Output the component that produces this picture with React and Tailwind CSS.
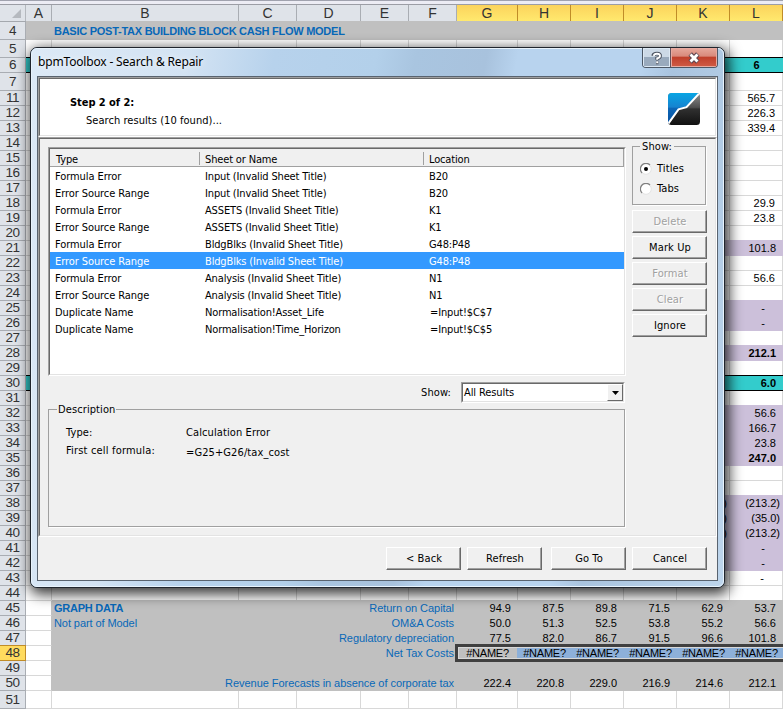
const columns = [
  { name: 'A', width: 'w-[26px]' },
  { name: 'B', width: 'w-[187px]' },
  { name: 'C', width: 'w-[58px]' },
  { name: 'D', width: 'w-[64px]' },
  { name: 'E', width: 'w-[48px]' },
  { name: 'F', width: 'w-[48px]' },
  { name: 'G', width: 'w-[61px]', active: true },
  { name: 'H', width: 'w-[53px]', active: true },
  { name: 'I', width: 'w-[53px]', active: true },
  { name: 'J', width: 'w-[53px]', active: true },
  { name: 'K', width: 'w-[53px]', active: true },
  { name: 'L', width: 'w-[53px]', active: true },
];

const rows = [
  { n: 4, tall: true, fill: 'title', cells: { B: 'BASIC POST-TAX BUILDING BLOCK CASH FLOW MODEL' } },
  { n: 5, tall: true },
  { n: 6, fill: 'teal', bold: true, center: true, cells: { L: '6' } },
  { n: 7, tall: true },
  { n: 11, cells: { L: '565.7' } },
  { n: 12, cells: { L: '226.3' } },
  { n: 13, cells: { L: '339.4' } },
  { n: 14 },
  { n: 15 },
  { n: 16 },
  { n: 17 },
  { n: 18, cells: { L: '29.9' } },
  { n: 19, cells: { L: '23.8' } },
  { n: 20 },
  { n: 21, fill: 'purple', cells: { L: '101.8' } },
  { n: 22 },
  { n: 23, cells: { L: '56.6' } },
  { n: 24 },
  { n: 25, fill: 'purple', cells: { L: '-' } },
  { n: 26, fill: 'purple', cells: { L: '-' } },
  { n: 27 },
  { n: 28, fill: 'purple', bold: true, cells: { L: '212.1' } },
  { n: 29 },
  { n: 30, fill: 'teal', bold: true, cells: { L: '6.0' } },
  { n: 31 },
  { n: 32, fill: 'purple', cells: { L: '56.6' } },
  { n: 33, fill: 'purple', cells: { L: '166.7' } },
  { n: 34, fill: 'purple', cells: { L: '23.8' } },
  { n: 35, fill: 'purple', bold: true, cells: { L: '247.0' } },
  { n: 36 },
  { n: 37 },
  { n: 38, fill: 'purple', cells: { K: '(213.2)', L: '(213.2)' } },
  { n: 39, fill: 'purple', cells: { K: '(35.0)', L: '(35.0)' } },
  { n: 40, fill: 'purple', cells: { K: '(213.2)', L: '(213.2)' } },
  { n: 41, fill: 'purple', cells: { L: '-' } },
  { n: 42, fill: 'purple', cells: { L: '-' } },
  { n: 43, cells: { L: '-' } },
  { n: 44 },
  { n: 45, fill: 'gray', cells: { B: 'GRAPH DATA', F: 'Return on Capital', G: '94.9', H: '87.5', I: '89.8', J: '71.5', K: '62.9', L: '53.7' } },
  { n: 46, fill: 'gray', cells: { B: 'Not part of Model', F: 'OM&A Costs', G: '50.0', H: '51.3', I: '52.5', J: '53.8', K: '55.2', L: '56.6' } },
  { n: 47, fill: 'gray', cells: { F: 'Regulatory depreciation', G: '77.5', H: '82.0', I: '86.7', J: '91.5', K: '96.6', L: '101.8' } },
  { n: 48, fill: 'gray', center: true, selected: true, cells: { F: 'Net Tax Costs', G: '#NAME?', H: '#NAME?', I: '#NAME?', J: '#NAME?', K: '#NAME?', L: '#NAME?' } },
  { n: 49, fill: 'gray' },
  { n: 50, fill: 'gray', cells: { F: 'Revenue Forecasts in absence of corporate tax', G: '222.4', H: '220.8', I: '229.0', J: '216.9', K: '214.6', L: '212.1' } },
  { n: 51, tall: true },
];

const results = [
  ['Formula Error', 'Input (Invalid Sheet Title)', 'B20'],
  ['Error Source Range', 'Input (Invalid Sheet Title)', 'B20'],
  ['Formula Error', 'ASSETS (Invalid Sheet Title)', 'K1'],
  ['Error Source Range', 'ASSETS (Invalid Sheet Title)', 'K1'],
  ['Formula Error', 'BldgBlks (Invalid Sheet Title)', 'G48:P48'],
  ['Error Source Range', 'BldgBlks (Invalid Sheet Title)', 'G48:P48'],
  ['Formula Error', 'Analysis (Invalid Sheet Title)', 'N1'],
  ['Error Source Range', 'Analysis (Invalid Sheet Title)', 'N1'],
  ['Duplicate Name', 'Normalisation!Asset_Life', '=Input!$C$7'],
  ['Duplicate Name', 'Normalisation!Time_Horizon', '=Input!$C$5'],
];

const fillClass = (fill, col) => {
  if (fill === 'title') return 'bg-[#c0c0c0] -mt-px';
  if (fill === 'teal') return 'bg-[#33cccc] border-y border-black -mt-px';
  if (fill === 'purple' && col >= 'G') return 'bg-[#ccc0da] -mt-px';
  if (fill === 'gray' && col !== 'A') return 'bg-[#c0c0c0] -mt-px';
  if (fill === 'gray') return 'border-r border-b border-r-[#c0c0c0] border-b-[#d8d8d8]';
  return 'border-r border-b border-[#d8d8d8]';
};

const alignClass = (row, col, text) => {
  if (col === 'B') return 'justify-start pl-[2px]';
  if (col === 'F') return 'justify-end pr-[3px]';
  if (row.center) return 'justify-center';
  if (text === '-') return 'justify-end pr-[18px]';
  if (text.startsWith('(')) return 'justify-end pr-[3px]';
  return 'justify-end pr-[7px]';
};

const trackClass = (row, col, bold) => {
  if (col === 'B') return bold ? 'tracking-[-0.26px]' : 'tracking-[-0.08px]';
  if (col === 'F') return row.n === 48 ? '' : 'tracking-[-0.05px]';
  return row.selected ? 'tracking-[-0.25px]' : '';
};

const Cell = ({ row, col }) => {
  const text = row.cells?.[col.name] || '';
  const label = col.name === 'B' || col.name === 'F';
  const bold = row.bold || text === 'GRAPH DATA' || row.fill === 'title';
  return (
    <div
      className={`relative flex shrink-0 items-center whitespace-nowrap text-[11px] leading-[13px] ${col.width} ${fillClass(row.fill, col.name)} ${alignClass(row, col.name, text)} ${trackClass(row, col.name, bold)} ${label ? 'text-[#0868b8]' : 'text-black'} ${bold ? 'font-bold' : ''}`}
    >
      {/* selection outline over G48:L48 */}
      {row.selected && col.name === 'G' && (
        <div className="absolute -left-[2px] -top-px z-10 flex h-[18px] w-[328px] border-[3px] border-r-0 border-[#404040]">
          <div className="flex grow border border-r-0 border-[#d8d8d8]">
            <div className="w-[58px]" />
            <div className="grow bg-[#8db0d9]" />
          </div>
        </div>
      )}
      <span className="relative z-10 pt-px">{text}</span>
    </div>
  );
};

const Sheet = () => (
  <div className="flex h-[709px] w-[783px] flex-col bg-white">
    <div className="h-[5px] shrink-0 border-t border-b border-t-[#a0a2ae] border-b-[#9b9da5] bg-[#ececf4]" />
    <div className="flex h-[17px] shrink-0 border-b border-[#a4a8ae] bg-[#dfe3e9]">
      <div className="flex w-[26px] shrink-0 items-end justify-end border-r border-[#b4b8be] pr-[4px] pb-[3px]">
        <svg width="9" height="9"><path d="M9 0V9H0Z" fill="#b5b9bf" /></svg>
      </div>
      {columns.map((col) => (
        <div
          key={col.name}
          className={`flex h-[17px] shrink-0 items-center justify-center border-r text-[14px] leading-[16px] text-[#333] ${col.width} ${col.active ? 'border-b border-[#c08c28] bg-linear-to-b from-[#fbd35c] to-[#ffe96e]' : 'border-b border-[#a9adb3]'}`}
        >
          {col.name}
        </div>
      ))}
    </div>
    {rows.map((row) => (
      <div key={row.n} className={`flex shrink-0 ${row.tall ? 'h-[18px]' : 'h-[15px]'}`}>
        <div
          className={`flex w-[26px] shrink-0 items-center justify-center border-r border-b text-[13.5px] leading-[14px] tracking-[-0.4px] text-[#333] ${row.selected ? '-mt-px border-t border-[#c08c28] bg-[#ffdb5e]' : 'border-[#a9adb3] bg-[#dfe3e9]'}`}
        >
          {row.n}
        </div>
        {columns.map((col) => (
          <Cell key={col.name} row={row} col={col} />
        ))}
      </div>
    ))}
  </div>
);

const Button = ({ children, disabled }) => (
  <button
    className={`h-[23px] w-[75px] shrink-0 border border-t-white border-l-white border-r-[#696969] border-b-[#696969] bg-[#f0f0f0] pt-px pl-px text-center shadow-[inset_-1px_-1px_0_#a0a0a0] ${disabled ? 'text-[#a0a0a0] [text-shadow:1px_1px_0_#fff]' : 'text-black'}`}
  >
    {children}
  </button>
);

const Radio = ({ label, checked }) => (
  <label className="flex h-[20px] items-center gap-[5px]">
    <svg width="12" height="12" viewBox="0 0 12 12">
      <circle cx="6" cy="6" r="5.3" fill="#fff" stroke="#e3e3e3" />
      <path d="M2 10A5.4 5.4 0 0 1 10 2" fill="none" stroke="#808080" strokeWidth="1.2" />
      {checked && <circle cx="6" cy="6" r="2" fill="#000" />}
    </svg>
    <span className="pt-px">{label}</span>
  </label>
);

const Logo = () => (
  <svg width="32" height="32" viewBox="0 0 32 32">
    <defs>
      <linearGradient id="blue" x1="0" y1="0" x2="0" y2="1">
        <stop offset="0" stopColor="#08a5e4" />
        <stop offset=".45" stopColor="#1684d0" />
        <stop offset=".5" stopColor="#0c66b6" />
        <stop offset="1" stopColor="#0750a0" />
      </linearGradient>
      <linearGradient id="dark" x1="0" y1="0" x2="0" y2="1">
        <stop offset="0" stopColor="#909090" />
        <stop offset=".45" stopColor="#4e4e4e" />
        <stop offset=".5" stopColor="#303030" />
        <stop offset="1" stopColor="#111" />
      </linearGradient>
      <clipPath id="tile"><rect width="32" height="32" rx="3.5" /></clipPath>
    </defs>
    <g clipPath="url(#tile)">
      <rect width="32" height="32" fill="url(#dark)" />
      <path d="M0 0H31L18.5 13.5L10.5 16L0 31Z" fill="url(#blue)" />
      <path d="M-1 32.5L10.5 16.3L18.5 14.2L32 -0.5" fill="none" stroke="#fff" strokeWidth="2" />
    </g>
  </svg>
);

const WindowControls = () => (
  <div className="flex h-[20px] w-[76px] overflow-hidden rounded-b-[4px] border border-t-0 border-[#4d5866]">
    <div className="flex w-[28px] shrink-0 items-center justify-center border-r border-[#63525b] bg-linear-to-b from-[#ccd9e6] from-50% to-[#99aabd] to-50% shadow-[inset_0_0_0_1px_#dce8f3]">
      <svg width="12" height="14" viewBox="0 0 12 14">
        <path d="M2.2 4.8Q2.6 2.7 6 2.7T9 5Q9 6.6 6.2 7.3V8.8M5 11.3H7.4" fill="none" stroke="#4c5360" strokeWidth="3.8" />
        <path d="M2.8 4.8Q3 2.7 6 2.7T9 5Q9 6.6 6.2 7.3V8.8M5.2 11.3H7.2" fill="none" stroke="#fff" strokeWidth="1.9" />
      </svg>
    </div>
    <div className="flex grow items-center justify-center bg-[linear-gradient(#e6a89c_0%,#d98a7c_42%,#c0402c_50%,#d05c46_100%)] shadow-[inset_0_0_0_1px_#e7aaa0]">
      <svg width="14" height="12" viewBox="0 0 14 12">
        <path d="M3.2 2L10.8 10M10.8 2L3.2 10" stroke="#5d4650" strokeWidth="4.8" />
        <path d="M3.5 2.4L10.5 9.6M10.5 2.4L3.5 9.6" stroke="#fff" strokeWidth="2.8" />
      </svg>
    </div>
  </div>
);

const ResultList = () => (
  <div className="h-[229px] w-[578px] border border-t-[#a0a0a0] border-l-[#a0a0a0] border-r-white border-b-white">
    <div className="h-full border border-t-[#696969] border-l-[#696969] border-r-[#e3e3e3] border-b-[#e3e3e3] bg-white tracking-[-0.15px]">
      <div className="flex h-[18px] items-center border-r border-b border-[#a0a0a0] bg-[#f0f0f0] pt-px">
        <div className="h-[13px] w-[150px] border-r border-[#a0a0a0] pl-[6px] leading-[15px]">Type</div>
        <div className="h-[13px] w-[224px] border-r border-[#a0a0a0] pl-[5px] leading-[15px]">Sheet or Name</div>
        <div className="h-[13px] pl-[5px] leading-[15px]">Location</div>
      </div>
      {results.map(([type, name, location], i) => (
        <div key={i} className={`flex h-[17px] leading-[19px] ${i === 5 ? 'bg-[#3399ff] text-white' : ''}`}>
          <div className="w-[150px] pl-[5px] tracking-[-0.08px]">{type}</div>
          <div className="w-[224px] pl-[5px]">{name}</div>
          <div className={i > 7 ? 'pl-[6px]' : 'pl-[5px]'}>{location}</div>
        </div>
      ))}
    </div>
  </div>
);

const Dialog = () => (
  <div className="absolute left-[30px] top-[47px] z-20 h-[541px] w-[695px] rounded-[7px] border border-[#20252d] bg-[#b7d3ee] shadow-[2px_4px_14px_2px_rgba(0,0,0,0.8)] font-['DejaVu_Sans_Condensed','DejaVu_Sans',sans-serif] text-[11px] tracking-[0.1px] whitespace-nowrap text-black">
    <div className="flex h-full flex-col rounded-[6px] border border-[#e8f3fc] bg-[linear-gradient(100deg,#dce9f6_0%,#d3e3f3_20%,#b7d2ec_31%,#b3d0ea_44%,#a9c5e0_49%,#a8c2dd_58%,#b8d3ee_62%,#b8d3ee_78%,#a9c4df_82%,#bdd5ec_100%)] px-[5px] pb-[5px]">
      <div className="flex h-[27px] shrink-0 justify-between">
        <div className="pl-[1px] pt-[4px] font-['Noto_Sans',sans-serif] text-[12px] leading-[18px] tracking-[-0.17px] [text-shadow:0_0_6px_#fff]">
          bpmToolbox - Search &amp; Repair
        </div>
        <div className="-mt-px"><WindowControls /></div>
      </div>
      <div className="flex grow flex-col border border-[#59636f] bg-[#f0f0f0]">
        <div className="h-[60px] shrink-0 border border-t-[#a0a0a0] border-l-[#a0a0a0] border-r-white border-b-white">
          <div className="flex h-full justify-between border border-t-[#696969] border-l-[#696969] border-r-[#e3e3e3] border-b-[#e3e3e3] bg-white pl-[30px] pr-[15px]">
            <div className="pt-[16px]">
              <div className="h-[18px] font-bold leading-[16px] tracking-[-0.05px]">Step 2 of 2:</div>
              <div className="pl-[16px] leading-[16px] tracking-[0.05px]">Search results (10 found)...</div>
            </div>
            <div className="pt-[14px]"><Logo /></div>
          </div>
        </div>
        <div className="h-[400px] shrink-0 border border-t-[#a0a0a0] border-l-[#a0a0a0] border-r-white border-b-white">
          <div className="flex h-full gap-[6px] border border-t-[#696969] border-l-[#696969] border-r-[#e3e3e3] border-b-[#e3e3e3] pl-[8px] pt-[8px]">
            <div className="flex flex-col">
              <ResultList />
              <div className="mt-[6px] flex h-[21px] justify-end pr-px">
                <div className="pr-[10px] leading-[22px]">Show:</div>
                <div className="flex w-[164px] border border-t-[#a0a0a0] border-l-[#a0a0a0] border-r-white border-b-white">
                  <div className="flex grow items-center justify-between border border-t-[#696969] border-l-[#696969] border-r-[#e3e3e3] border-b-[#e3e3e3] bg-white pl-[1px] tracking-[-0.1px]">
                    <span className="pt-[2px]">All Results</span>
                    <div className="flex h-full w-[16px] items-center justify-center border border-t-white border-l-white border-r-[#696969] border-b-[#696969] bg-[#f0f0f0]">
                      <svg width="7" height="4"><path d="M0 0H7L3.5 4Z" /></svg>
                    </div>
                  </div>
                </div>
              </div>
              <fieldset className="mt-[-1px] h-[125px] w-[577px] border border-[#a0a0a0] shadow-[1px_1px_0_#fff] pl-[16px]">
                <legend className="ml-[-8px] px-px leading-[14px]"><span className="relative top-px">Description</span></legend>
                <div className="flex h-[27px] pt-[9px] leading-[16px]">
                  <div className="w-[121px] pl-px">Type:</div>
                  <div>Calculation Error</div>
                </div>
                <div className="flex leading-[16px]">
                  <div className="w-[121px] pl-px tracking-[0.18px]">First cell formula:</div>
                  <div className="pt-[2px]">=G25+G26/tax_cost</div>
                </div>
              </fieldset>
            </div>
            <div className="flex w-[75px] flex-col gap-[3px]">
              <fieldset className="mt-[-8px] mb-[2px] h-[66px] w-[74px] border border-[#a0a0a0] pl-[7px] shadow-[1px_1px_0_#fff]">
                <legend className="px-[2px] leading-[14px]"><span className="relative top-px">Show:</span></legend>
                <div className="pt-[6px]">
                  <Radio label="Titles" checked />
                  <Radio label="Tabs" />
                </div>
              </fieldset>
              <Button disabled>Delete</Button>
              <Button>Mark Up</Button>
              <Button disabled>Format</Button>
              <Button disabled>Clear</Button>
              <Button>Ignore</Button>
            </div>
          </div>
        </div>
        <div className="flex justify-end pr-[10px] pt-[10px]">
          <Button>&lt; Back</Button>
          <div className="ml-[6px] mr-[9px]"><Button>Refresh</Button></div>
          <div className="mr-[6px]"><Button>Go To</Button></div>
          <Button>Cancel</Button>
        </div>
      </div>
    </div>
  </div>
);

export default function App() {
  return (
    <div className="relative h-[709px] w-[783px] overflow-hidden font-['Liberation_Sans',Arial,sans-serif]">
      <Sheet />
      <Dialog />
    </div>
  );
}
